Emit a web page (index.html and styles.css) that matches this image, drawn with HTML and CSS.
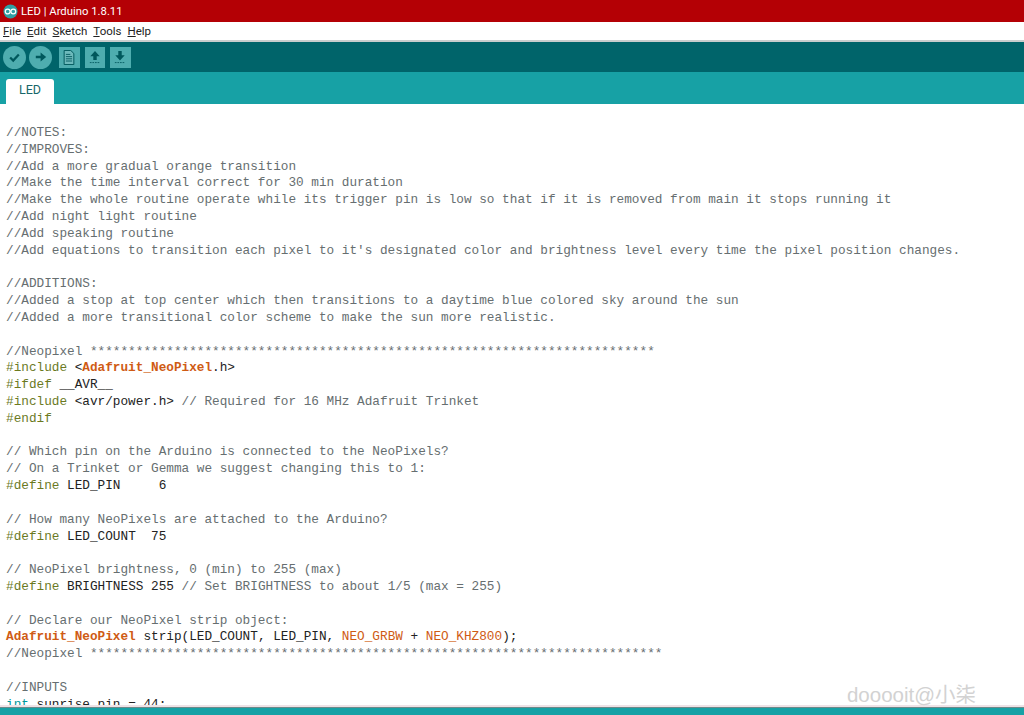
FILE: index.html
```html
<!DOCTYPE html>
<html lang="en">
<head>
<meta charset="utf-8">
<title>LED | Arduino 1.8.11</title>
<link rel="stylesheet" href="styles.css">
</head>
<body>
<div class="app">
  <header class="titlebar">
    <svg class="logo" width="15" height="15" viewBox="0 0 16 16">
      <circle cx="8" cy="8" r="7.5" fill="#2f9ea3"/>
      <circle cx="5" cy="8" r="2.6" fill="none" stroke="#fff" stroke-width="1.3"/>
      <circle cx="11" cy="8" r="2.6" fill="none" stroke="#fff" stroke-width="1.3"/>
    </svg>
    <span>LED | Arduino 1.8.11</span>
  </header>
  <nav class="menubar">
    <span><u>F</u>ile</span><span><u>E</u>dit</span><span><u>S</u>ketch</span><span><u>T</u>ools</span><span><u>H</u>elp</span>
  </nav>
  <div class="toolbar">
    <div class="btn round">
      <svg width="13" height="13" viewBox="0 0 15 15"><path d="M2.500 7.500 L6 11 L12.500 4" fill="none" stroke="#00585c" stroke-width="2.600"/></svg>
    </div>
    <div class="btn round">
      <svg width="12" height="12" viewBox="0 0 15 15"><path d="M1 5.800h6V2l7 5.500L7 13V9.200H1z" fill="#00585c"/></svg>
    </div>
    <div class="btn square first">
      <svg width="12" height="15" viewBox="0 0 13 17"><path d="M1 .5h7.500L12 4v12.500H1z" fill="#6db9bb" stroke="#00585c" stroke-width="1.100"/><path d="M3 5h5M3 7.500h7M3 10h7M3 12.500h7" stroke="#00585c" stroke-width="1"/></svg>
    </div>
    <div class="btn square">
      <svg width="12" height="14" viewBox="0 0 14 16"><path d="M7 1l5.500 6H9v4.500H5V7H1.500z" fill="#00585c"/><path d="M1 14.500h12" stroke="#00585c" stroke-width="1" stroke-dasharray="2 1"/></svg>
    </div>
    <div class="btn square">
      <svg width="12" height="14" viewBox="0 0 14 16"><path d="M7 12l5.500-6H9V1H5v5H1.500z" fill="#00585c"/><path d="M1 14.500h12" stroke="#00585c" stroke-width="1" stroke-dasharray="2 1"/></svg>
    </div>
  </div>
  <div class="tabstrip"><div class="tab">LED</div></div>
  <main class="editor">
<div class="c">//NOTES:</div>
<div class="c">//IMPROVES:</div>
<div class="c">//Add a more gradual orange transition</div>
<div class="c">//Make the time interval correct for 30 min duration</div>
<div class="c">//Make the whole routine operate while its trigger pin is low so that if it is removed from main it stops running it</div>
<div class="c">//Add night light routine</div>
<div class="c">//Add speaking routine</div>
<div class="c">//Add equations to transition each pixel to it's designated color and brightness level every time the pixel position changes.</div>
<div> </div>
<div class="c">//ADDITIONS:</div>
<div class="c">//Added a stop at top center which then transitions to a daytime blue colored sky around the sun</div>
<div class="c">//Added a more transitional color scheme to make the sun more realistic.</div>
<div> </div>
<div class="c">//Neopixel **************************************************************************</div>
<div><span class="k">#include</span> &lt;<span class="o">Adafruit_NeoPixel</span>.h&gt;</div>
<div><span class="k">#ifdef</span> __AVR__</div>
<div><span class="k">#include</span> &lt;avr/power.h&gt; <span class="c">// Required for 16 MHz Adafruit Trinket</span></div>
<div class="k">#endif</div>
<div> </div>
<div class="c">// Which pin on the Arduino is connected to the NeoPixels?</div>
<div class="c">// On a Trinket or Gemma we suggest changing this to 1:</div>
<div><span class="k">#define</span> LED_PIN     6</div>
<div> </div>
<div class="c">// How many NeoPixels are attached to the Arduino?</div>
<div><span class="k">#define</span> LED_COUNT  75</div>
<div> </div>
<div class="c">// NeoPixel brightness, 0 (min) to 255 (max)</div>
<div><span class="k">#define</span> BRIGHTNESS 255 <span class="c">// Set BRIGHTNESS to about 1/5 (max = 255)</span></div>
<div> </div>
<div class="c">// Declare our NeoPixel strip object:</div>
<div><span class="o">Adafruit_NeoPixel</span> strip(LED_COUNT, LED_PIN, <span class="o2">NEO_GRBW</span> + <span class="o2">NEO_KHZ800</span>);</div>
<div class="c">//Neopixel ***************************************************************************</div>
<div> </div>
<div class="c">//INPUTS</div>
<div><span class="t">int</span> sunrise_pin = 44;</div>
  </main>
  <footer class="statusbar"></footer>
  <div class="watermark">dooooit@小柒</div>
</div>
</body>
</html>
```
FILE: styles.css
```css
html, body {
  margin: 0;
  padding: 0;
  height: 100%;
  overflow: hidden;
  background: #fff;
}
.app {
  position: relative;
  width: 1024px;
  height: 715px;
  display: flex;
  flex-direction: column;
  overflow: hidden;
}
.titlebar {
  height: 22px;
  flex: none;
  background: #b40005;
  color: #fff;
  display: flex;
  align-items: center;
  gap: 3px;
  padding-left: 3px;
  font: 11.300px "Roboto", sans-serif;
}
.menubar {
  height: 18px;
  flex: none;
  background: #fff;
  border-bottom: 2px solid #c9cdcd;
  display: flex;
  align-items: center;
  gap: 6px;
  padding-left: 3px;
  font: 11.500px "Roboto", sans-serif;
  color: #222;
}
.toolbar {
  height: 30px;
  flex: none;
  background: #00646a;
  display: flex;
  align-items: center;
  gap: 3px;
  padding-left: 3px;
}
.btn {
  background: #4eadaf;
  display: flex;
  align-items: center;
  justify-content: center;
  flex: none;
}
.round {
  width: 23px;
  height: 23px;
  border-radius: 50%;
}
.square {
  width: 20.500px;
  height: 21px;
  margin-right: 2px;
}
.square.first {
  margin-left: 4px;
}
.tabstrip {
  height: 32px;
  flex: none;
  background: #17a1a5;
  display: flex;
  align-items: flex-end;
  padding-left: 6px;
}
.tab {
  width: 48px;
  height: 25px;
  background: #fff;
  border-radius: 3px 3px 0 0;
  color: #17666a;
  font: 12.500px/22px "Roboto", sans-serif;
  text-align: center;
}
.editor {
  flex: 1;
  min-height: 0;
  overflow: hidden;
  background: #fff;
  padding: 21px 0 0 6px;
  font: 12.720px/16.820px "Liberation Mono", monospace;
  color: #222;
  border-bottom: 2px solid #eee2e6;
}
.editor > div {
  height: 16.820px;
  white-space: pre;
}
.c { color: #666e70; }
.k { color: #6b7a1f; }
.o { color: #cf5b14; font-weight: bold; }
.o2 { color: #cf5b14; }
.t { color: #00979c; }
.statusbar {
  height: 8px;
  box-sizing: border-box;
  flex: none;
  background: #17a1a5;
  border-top: 1px solid #6d8a8a;
}
.watermark {
  position: absolute;
  right: 48px;
  bottom: 7px;
  font: 20.500px "Liberation Sans", "Noto Sans CJK SC", sans-serif;
  color: #d2d2d2;
}
```
